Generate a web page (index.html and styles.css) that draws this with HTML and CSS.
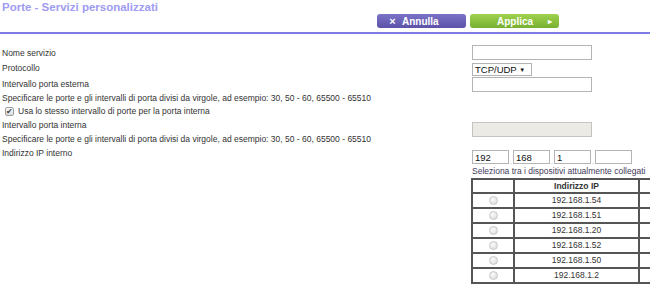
FILE: index.html
```html
<!DOCTYPE html>
<html lang="it">
<head>
    <meta charset="UTF-8">
    <title>Porte - Servizi personalizzati</title>
    <link rel="stylesheet" href="styles.css">
</head>
<body>
    <div class="header">
        <h1 class="title">Porte - Servizi personalizzati</h1>
        <div class="actions">
            <button class="btn btn-cancel"><span class="btn-icon">&times;</span>Annulla</button>
            <button class="btn btn-apply">Applica<span class="btn-arrow">&#9656;</span></button>
        </div>
    </div>

    <div class="form">
        <div class="row">
            <div class="label">Nome servizio</div>
            <input class="field" type="text">
        </div>
        <div class="row row-tall">
            <div class="label">Protocollo</div>
            <div class="select">TCP/UDP <span class="caret">&#9660;</span></div>
        </div>
        <div class="row">
            <div class="label">Intervallo porta esterna</div>
            <input class="field field-mid" type="text">
        </div>
        <div class="row row-low">
            <div class="label">Specificare le porte e gli intervalli di porta divisi da virgole, ad esempio: 30, 50 - 60, 65500 - 65510</div>
        </div>
        <div class="row row-short">
            <label class="label check-label"><span class="check">&#10004;</span>Usa lo stesso intervallo di porte per la porta interna</label>
        </div>
        <div class="row row-short">
            <div class="label">Intervallo porta interna</div>
            <input class="field field-low" type="text" disabled>
        </div>
        <div class="row row-short">
            <div class="label">Specificare le porte e gli intervalli di porta divisi da virgole, ad esempio: 30, 50 - 60, 65500 - 65510</div>
        </div>
        <div class="row row-short">
            <div class="label">Indirizzo IP interno</div>
            <div class="ip field-low">
                <input class="ip-part" type="text" value="192"><span class="dot">.</span><input class="ip-part" type="text" value="168"><span class="dot">.</span><input class="ip-part" type="text" value="1"><span class="dot">.</span><input class="ip-part" type="text">
            </div>
        </div>
        <div class="row hint">Seleziona tra i dispositivi attualmente collegati</div>

        <div class="devices-wrap">
            <table class="devices">
                <tr class="head">
                    <td class="col-radio"></td>
                    <td class="col-ip">Indirizzo IP</td>
                    <td class="col-name"></td>
                </tr>
                <tr><td><span class="radio"></span></td><td>192.168.1.54</td><td></td></tr>
                <tr><td><span class="radio"></span></td><td>192.168.1.51</td><td></td></tr>
                <tr><td><span class="radio"></span></td><td>192.168.1.20</td><td></td></tr>
                <tr><td><span class="radio"></span></td><td>192.168.1.52</td><td></td></tr>
                <tr><td><span class="radio"></span></td><td>192.168.1.50</td><td></td></tr>
                <tr><td><span class="radio"></span></td><td>192.168.1.2</td><td></td></tr>
            </table>
        </div>
    </div>
</body>
</html>
```

FILE: styles.css
```css
html, body {
    overflow: hidden;
}

body {
    margin: 0;
    background: #fff;
    font-family: "Liberation Sans", Arial, sans-serif;
    font-size: 8.5px;
    color: #333;
}

.title {
    margin: 0;
    padding-left: 2px;
    font-size: 11.5px;
    line-height: 14px;
    font-weight: bold;
    color: #9e9bf2;
}

.actions {
    display: flex;
    gap: 4px;
    padding-left: 377px;
    padding-bottom: 4px;
    border-bottom: 2px solid #7e7be3;
}

.btn {
    display: flex;
    align-items: center;
    width: 89px;
    height: 14px;
    border: 0;
    border-radius: 3px;
    color: #fff;
    font: bold 10px "Liberation Sans", Arial, sans-serif;
    cursor: pointer;
}

.btn-cancel {
    background: linear-gradient(#7b73c8, #5c53a8);
    padding: 0 0 0 6px;
}

.btn-icon {
    width: 19px;
    font-size: 11px;
}

.btn-apply {
    background: linear-gradient(#9fd24f, #77b031);
    padding: 0 7px 0 27px;
}

.btn-arrow {
    margin-left: auto;
    font-size: 8px;
}

.form {
    margin-top: 11px;
}

.row {
    display: flex;
    align-items: center;
    height: 15px;
}

.row-tall {
    height: 16px;
}

.row-low {
    height: 13px;
}

.row-short {
    height: 14px;
}

.label {
    width: 470px;
    padding-left: 2px;
    flex-shrink: 0;
    white-space: nowrap;
}

.check-label {
    display: flex;
    align-items: center;
}

.check {
    box-sizing: border-box;
    width: 9px;
    height: 9px;
    margin: 0 4px 0 3px;
    border: 1px solid #a0a0a0;
    border-radius: 2px;
    background: linear-gradient(#fafafa, #dcdcdc);
    color: #444;
    font-size: 8px;
    line-height: 7px;
    text-align: center;
}

.field {
    box-sizing: border-box;
    width: 120px;
    height: 15px;
    margin: 0;
    border: 1px solid #b4b4b4;
    background: #fff;
    font: 9px "Liberation Sans", Arial, sans-serif;
}

.field:disabled {
    background: #ebeae4;
    border-color: #c4c4c0;
}

.field-mid {
    margin-top: 2px;
}

.field-low {
    margin-top: 8px;
}

.select {
    box-sizing: border-box;
    width: 60px;
    height: 13px;
    margin-top: 3px;
    padding-left: 2px;
    border: 1px solid #b4b4b4;
    font-size: 9.5px;
    line-height: 11px;
    color: #111;
}

.caret {
    font-size: 6px;
    vertical-align: 1px;
}

.ip {
    display: flex;
    align-items: flex-end;
}

.ip-part {
    box-sizing: border-box;
    width: 37px;
    height: 14px;
    margin: 0;
    padding: 0 2px;
    border: 1px solid #b4b4b4;
    font: 9.5px "Liberation Sans", Arial, sans-serif;
    color: #111;
}

.dot {
    width: 4px;
    text-align: center;
    font-size: 7px;
    line-height: 4px;
    color: #999;
}

.hint {
    margin-top: 3px;
    padding-left: 472px;
    color: #3f3a5a;
    white-space: nowrap;
}

.devices-wrap {
    margin-left: 471px;
    overflow: hidden;
}

.devices {
    border: 1px solid #555;
    border-spacing: 0;
    table-layout: fixed;
    width: 289px;
}

.devices td {
    box-sizing: border-box;
    padding: 0;
    border: 1px solid #555;
    line-height: 13px;
    text-align: center;
    white-space: nowrap;
    overflow: hidden;
}

.devices .head td {
    line-height: 12px;
    font-weight: bold;
}

.col-radio {
    width: 42px;
}

.col-ip {
    width: 125px;
}

.col-name {
    width: 120px;
}

.radio {
    display: inline-block;
    box-sizing: border-box;
    width: 9px;
    height: 9px;
    border: 1px solid #c8c8c8;
    border-radius: 50%;
    background: radial-gradient(circle at 40% 35%, #fbfbfb, #d6d6d6);
    vertical-align: middle;
}
```
